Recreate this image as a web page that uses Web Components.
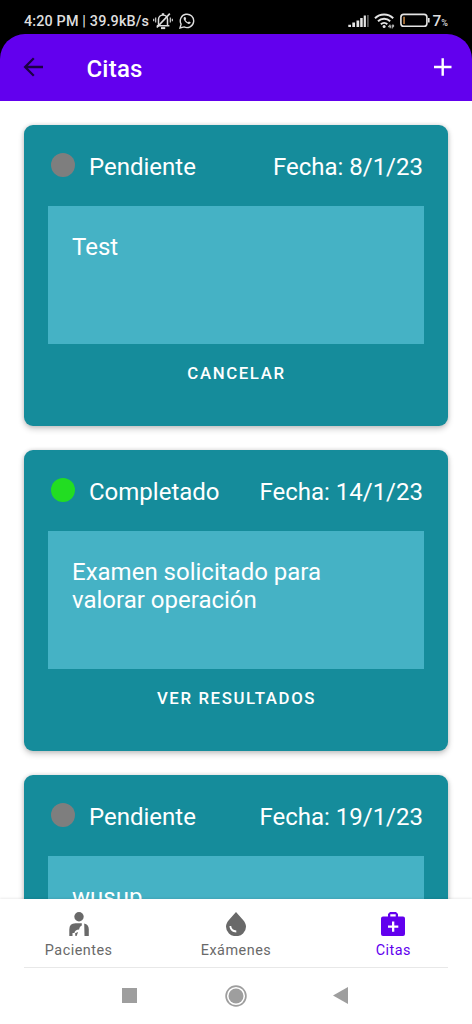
<!DOCTYPE html>
<html lang="es">
<head>
<meta charset="utf-8">
<title>Citas</title>
<style>
html,body{margin:0;height:100%;background:#fff;overflow:hidden}
body{font-family:Roboto,"Liberation Sans",sans-serif;color:#fff}
</style>
</head>
<body>
<phone-screen>
  <status-bar slot="top"></status-bar>
  <app-bar slot="top">Citas</app-bar>
  <cita-card state="pendiente"><span slot="estado">Pendiente</span><span slot="fecha">Fecha: 8/1/23</span>Test<span slot="accion">CANCELAR</span></cita-card>
  <cita-card state="completado"><span slot="estado">Completado</span><span slot="fecha">Fecha: 14/1/23</span>Examen solicitado para valorar operación<span slot="accion">VER RESULTADOS</span></cita-card>
  <cita-card state="pendiente"><span slot="estado">Pendiente</span><span slot="fecha">Fecha: 19/1/23</span>wusup</cita-card>
  <bottom-nav slot="bottom">
    <nav-tab icon="paciente">Pacientes</nav-tab>
    <nav-tab icon="gota">Exámenes</nav-tab>
    <nav-tab icon="maletin" active>Citas</nav-tab>
  </bottom-nav>
  <system-nav slot="bottom"></system-nav>
</phone-screen>
<script>
const define = (name, html) => customElements.define(name, class extends HTMLElement {
  constructor() {
    super();
    this.attachShadow({ mode: 'open' }).innerHTML = typeof html === 'function' ? html(this) : html;
  }
});

define('phone-screen', `<style>
:host{display:flex;flex-direction:column;width:472px;height:1024px;background:#fff;overflow:hidden}
.top{background:#000;flex:none}
main{flex:1;min-height:0;overflow:hidden;box-sizing:border-box;padding:24px 24px 0;display:flex;flex-direction:column;gap:24px}
.bottom{flex:none;background:#fff;box-shadow:0 -1px 2px rgba(0,0,0,.08)}
</style><div class="top"><slot name="top"></slot></div><main><slot></slot></main><div class="bottom"><slot name="bottom"></slot></div>`);

define('status-bar', `<style>
:host{display:flex;height:34px;box-sizing:border-box;padding:9px 24px 0;align-items:flex-start;color:#dedede}
.t{font:500 14.4px/24px Roboto,sans-serif;white-space:pre;letter-spacing:.14px;margin-top:1px}
svg{flex:none;display:block}
.sp{flex:1}
.p{font:500 15.5px/24px Roboto,sans-serif}
.p small{font-size:9px}
</style><span class="t">4:20 PM | 39.9kB/s</span>
<svg style="margin:3px 0 0 4px" width="20" height="18" viewBox="0 0 20 18" fill="none" stroke="#dedede" stroke-width="1.500"><path d="M3.800 13.700h12.600M5.500 13.500V7.500a4.500 4.500 0 0 1 9 0v6M8.800 1.900h2.400"/><path d="M8 16.100h4.200" stroke-width="2"/><path d="M3.800 15.500 16.800 1.700" stroke-width="1.700"/><path d="M2.700 5.500v5M.7 6.700v2.600M17.300 5.500v5M19.300 6.700v2.600" stroke-width="1.100"/></svg>
<svg style="margin:4px 0 0 6px" width="16" height="16" viewBox="0 0 16 16"><path d="M1 15l1.100-3.900A6.700 6.700 0 1 1 5 13.900z" fill="none" stroke="#dedede" stroke-width="1.400"/><path d="M5.500 4c-1 .6-1.200 1.800-.3 3.300 1 1.800 2.600 3.200 4.300 3.600 1.100.2 2-.5 2.200-1.600L9.900 8.400l-.9.900C8 8.900 7 7.900 6.500 7l.7-.9L6.400 4z" fill="#dedede"/></svg>
<span class="sp"></span>
<svg style="margin:5px 0 0" width="22" height="14" viewBox="0 0 22 14"><path d="M.3 13v-2.300h2.700V13zM4.300 13h2.700V8.500H4.300zM8.500 13h2.700V6.500H8.500zM12.200 13h2.500V4h-2.500zM15.700 13h2.200V1.500h-2.200z" fill="#e4e4e4"/><path d="M19 13h1.800V1H19z" fill="#555"/></svg>
<svg style="margin:3px 0 0 4px" width="22" height="18" viewBox="0 0 22 18" fill="none" stroke="#e4e4e4" stroke-width="2"><path d="M1 6.300a13 13 0 0 1 18.200 0M4 9.300a8.800 8.800 0 0 1 12.200 0M6.900 12.200a4.700 4.700 0 0 1 6.400 0"/><circle cx="10.100" cy="14.600" r="1.500" fill="#e4e4e4" stroke="none"/><path d="M16 12.500l-1.600 2.300H17M16.200 13v3.300M18.200 16.500v-3.500h1.400v1.800H18.200" stroke-width=".8"/></svg>
<svg style="margin:4px 0 0 4px" width="31" height="15" viewBox="0 0 31 15"><rect x=".9" y="1.400" width="26" height="11.800" rx="2.800" fill="none" stroke="#e4e4e4" stroke-width="1.600"/><path d="M28 5h1.600v4.600H28z" fill="#e4e4e4"/><path d="M3.200 3.700h1.700v7.200H3.200z" fill="#b5793c"/></svg>
<span class="p" style="margin-left:2px">7<small>%</small></span>`);

define('app-bar', `<style>
:host{display:flex;height:67px;box-sizing:border-box;background:#6200ee;border-radius:25px 25px 0 0;padding:0 18px 0 23px;align-items:center}
h1{margin:0 auto 0 42.500px;font:500 24px/28px Roboto,sans-serif;letter-spacing:.2px;padding-top:2px}
svg{display:block}
</style><svg style="margin-bottom:2px" width="21" height="20" viewBox="0 0 21 20" fill="none" stroke="#1c0045" stroke-width="2.300"><path d="M20 10H2.500M10.800 1.300 2.100 10l8.700 8.700"/></svg><h1><slot></slot></h1><svg style="margin-bottom:1px" width="22" height="20" viewBox="0 0 22 20" stroke="#fff" stroke-width="2.400"><path d="M2 10h17.500M10.700 1.200v17.500"/></svg>`);

define('cita-card', `<style>
:host{display:flex;flex-direction:column;flex:none;height:301px;box-sizing:border-box;padding:0 24px;background:#158c9b;border-radius:9px;box-shadow:0 3px 6px rgba(0,0,0,.2),0 0 4px rgba(0,0,0,.14)}
header{height:81px;display:flex;align-items:center;font-size:24px;line-height:28px}
i{width:24px;height:24px;border-radius:50%;background:#7e7e7e;margin:0 14.500px 1px 2.500px}
:host([state=completado]) i{background:#22dd22}
header span{padding-top:2px}
.fecha{margin:0 1px 0 auto}
.nota{height:138px;box-sizing:border-box;background:#45b2c5;padding:27px 24px;font-size:24px;line-height:28px}
.nota p{margin:0;width:260px}
button{height:58px;border:0;padding:0 0 0 1px;background:none;color:#fff;font:500 16.800px/58px Roboto,sans-serif;letter-spacing:1.620px}
</style><header><i></i><span><slot name="estado"></slot></span><span class="fecha"><slot name="fecha"></slot></span></header><div class="nota"><p><slot></slot></p></div><button><slot name="accion"></slot></button>`);

define('bottom-nav', `<style>
:host{display:grid;grid-template-columns:repeat(3,1fr);height:68px}
</style><slot></slot>`);

const icons = {
  paciente: '<circle cx="12" cy="4.800" r="4.700"/><path d="M2.300 24v-6.500Q2.300 11.200 8.500 11.200h6.300v2.300c-1.700.8-2.300 2.100-2.700 4-2.600.1-4.300 1.300-4.700 3.400H5.500V24zM17.200 11.600c3.200.6 4.600 2.800 4.600 5.600V24h-4.300zM8.100 21.200l3-1.200-1.500 4H8.400z"/>',
  gota: '<path fill-rule="evenodd" d="M12 0 19.300 8.200C21 10.200 22 12.400 22 14.700A9.800 9.300 0 0 1 2 14.700C2 12.400 3 10.200 4.700 8.200zM7.200 14H5.500c.2 3.900 2.900 6.400 6.800 6.500v-2c-2.900-.2-4.900-1.800-5.100-4.500z"/>',
  maletin: '<path fill-rule="evenodd" d="M9 0h6l2 2v2.500h5q2 0 2 2V22q0 2-2 2H2q-2 0-2-2V6.500q0-2 2-2h5V2zM9.300 2.300v2.200h5.400V2.300zM11 9.500v4H7v2.300h4v4h2.300v-4h4v-2.300h-4v-4z"/>'
};
define('nav-tab', el => `<style>
:host{display:flex;flex-direction:column;align-items:center;padding-top:13px;color:#696969;font-size:14.400px;line-height:17px;letter-spacing:.5px}
:host([active]){color:#6200ee}
svg{width:24px;height:24px;margin-bottom:6px;fill:currentColor}
</style><svg viewBox="0 0 24 24">${icons[el.getAttribute('icon')]}</svg><slot></slot>`);

define('system-nav', `<style>
:host{display:flex;height:57px;box-sizing:border-box;margin:0 24px;border-top:1px solid #e8e8e8;align-items:center;padding:0 0 1px 98px}
svg{display:block}
</style><svg width="15" height="15"><path d="M0 0h15v15H0z" fill="#9e9e9e"/></svg>
<svg style="margin:0 86px 0 88px" width="22" height="22" viewBox="0 0 22 22"><circle cx="11" cy="11" r="9.900" fill="none" stroke="#9e9e9e" stroke-width="1.700"/><circle cx="11" cy="11" r="7.500" fill="#9e9e9e"/></svg>
<svg width="15" height="17"><path d="M0 8.500 15 0v17z" fill="#9e9e9e"/></svg>`);
</script>
</body>
</html>
